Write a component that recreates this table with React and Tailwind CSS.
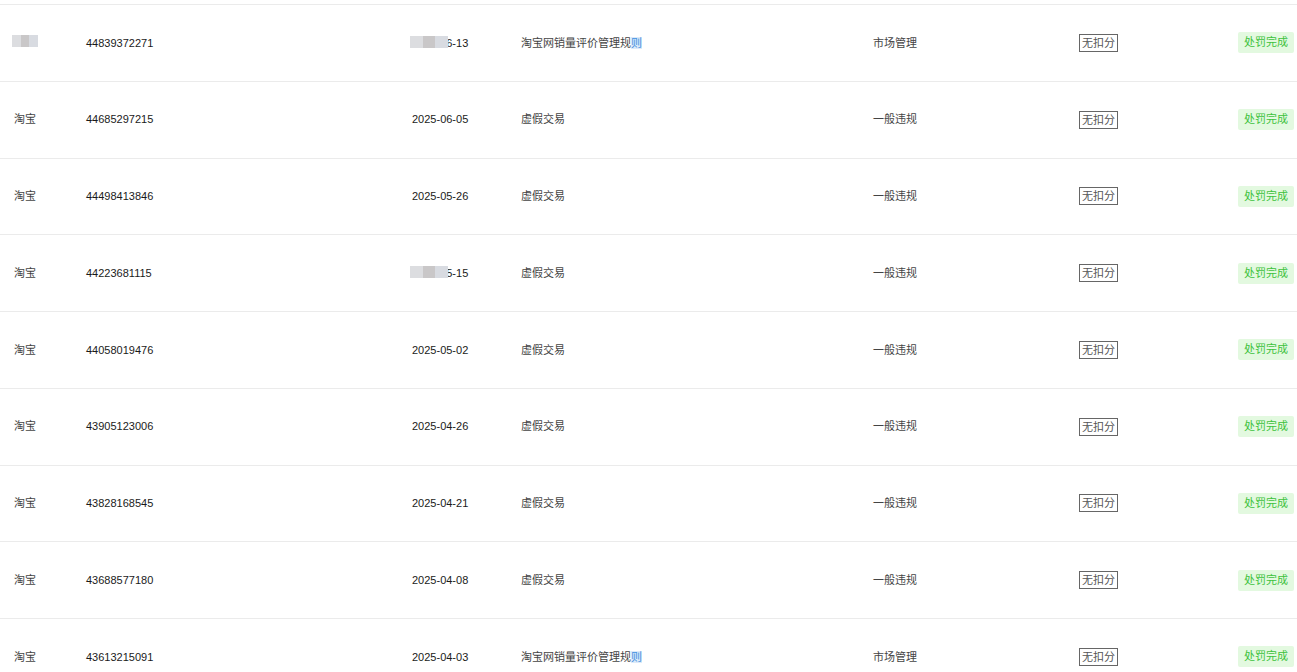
import React from "react";

const rows = [
  { shop: "淘宝", id: "44839372271", date: "2025-06-13", reason: "淘宝网销量评价管理规则", type: "市场管理", maskShop: true, maskDate: true },
  { shop: "淘宝", id: "44685297215", date: "2025-06-05", reason: "虚假交易", type: "一般违规" },
  { shop: "淘宝", id: "44498413846", date: "2025-05-26", reason: "虚假交易", type: "一般违规" },
  { shop: "淘宝", id: "44223681115", date: "2025-05-15", reason: "虚假交易", type: "一般违规", maskDate: true },
  { shop: "淘宝", id: "44058019476", date: "2025-05-02", reason: "虚假交易", type: "一般违规" },
  { shop: "淘宝", id: "43905123006", date: "2025-04-26", reason: "虚假交易", type: "一般违规" },
  { shop: "淘宝", id: "43828168545", date: "2025-04-21", reason: "虚假交易", type: "一般违规" },
  { shop: "淘宝", id: "43688577180", date: "2025-04-08", reason: "虚假交易", type: "一般违规" },
  { shop: "淘宝", id: "43613215091", date: "2025-04-03", reason: "淘宝网销量评价管理规则", type: "市场管理" },
];

const Mask = ({ className }) => (
  <span className={"absolute flex " + className}>
    <span className="h-full w-1/3 bg-[#dcdde0]" />
    <span className="h-full w-1/3 bg-[#c9c7c8]" />
    <span className="h-full w-1/3 bg-[#d8dbe1]" />
  </span>
);

const Row = ({ row }) => {
  const isRule = row.reason.endsWith("规则");
  return (
    <div className="flex h-[76.75px] items-center border-b border-[#ebebeb] bg-white text-[11px] text-[#333]">
      <div className="relative w-[86px] pl-[14px]">
        {row.maskShop ? (
          <span className="relative inline-block h-[12px] w-[26px]">
            <Mask className="left-[-2px] top-0 h-[12px] w-[26px] blur-[0.5px]" />
          </span>
        ) : (
          <span className="text-[#444]">{row.shop}</span>
        )}
      </div>
      <div className="w-[326px] text-[#1a1a1a]">{row.id}</div>
      <div className="relative w-[109px] text-[#1a1a1a]">
        {row.date}
        {row.maskDate && <Mask className="left-[-2px] top-[1px] h-[12px] w-[38px] blur-[0.5px]" />}
      </div>
      <div className="w-[352px] text-[#444]">
        {isRule ? (
          <>
            {row.reason.slice(0, -1)}
            <span className="bg-[#dceaf9] text-[#3d8fe0]">{row.reason.slice(-1)}</span>
          </>
        ) : (
          row.reason
        )}
      </div>
      <div className="w-[206px] text-[#444]">{row.type}</div>
      <div className="w-[159px]">
        <span className="inline-block border border-[#666] px-[2px] leading-[16px] text-[#555]">无扣分</span>
      </div>
      <div>
        <span className="inline-block rounded-[2px] bg-[#e3f9e0] px-[6px] leading-[21px] text-[#3dc23d]">
          处罚完成
        </span>
      </div>
    </div>
  );
};

export default function App() {
  return (
    <div
      className="h-[672px] w-[1297px] overflow-hidden bg-white"
      style={{ fontFamily: '"Liberation Sans", "Noto Sans CJK SC", sans-serif' }}
    >
      <div className="h-[5px] border-b border-[#ebebeb]" />
      {rows.map((row) => (
        <Row key={row.id} row={row} />
      ))}
    </div>
  );
}
